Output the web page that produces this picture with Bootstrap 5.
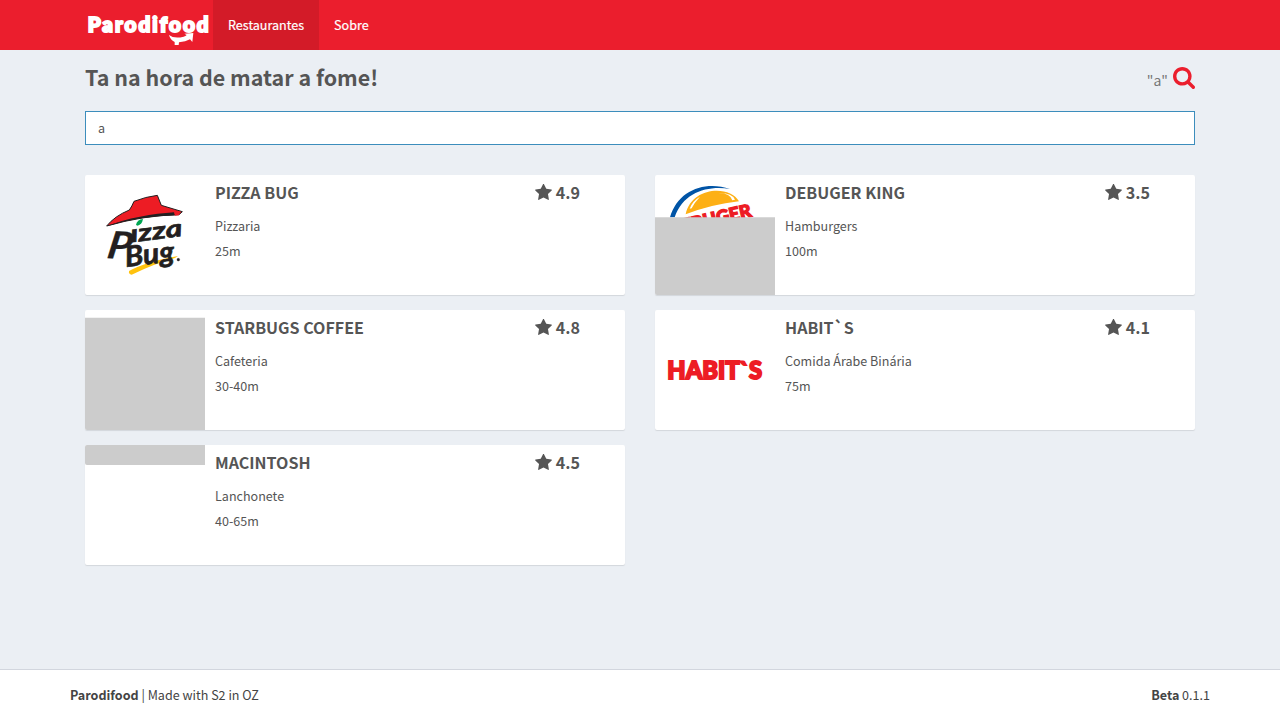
<!DOCTYPE html>
<html lang="pt-BR">
<head>
<meta charset="utf-8">
<meta name="viewport" content="width=device-width, initial-scale=1">
<title>Parodifood</title>
<link rel="stylesheet" href="https://cdn.jsdelivr.net/npm/bootstrap@5.3.0/dist/css/bootstrap.min.css">
<style>
  body { font-family: "Noto Sans CJK SC", "Noto Sans CJK JP", sans-serif; font-size: 12.55px; line-height: 20px; color: #555; background: #ebeff4; }
  .container { --bs-gutter-x: 30px; max-width: 1140px; }
  .topbar { height: 50px; background: #eb1e2d; }
  .brand-logo { width: 128px; height: 50px; }
  .topbar .nav-link { height: 50px; padding: 15px; color: #fff; line-height: 20px; }
  .topbar .nav-link span { -webkit-text-stroke: .2px #fff; }
  .topbar .nav-link.active { background: #d31b28; }
  .page-title { font-size: 21.45px; line-height: 26px; font-weight: 700; margin: 0; }
  .page-head { height: 61px; padding-top: 14px; }
  .query { font-size: 14px; color: #777; line-height: 26px; padding-top: 3px; }
  .find-icon { width: 22px; height: 22px; margin: 3px 0 0 5px; }
  .search-input { height: 34px; border: 1px solid #3c8dbc; border-radius: 0; padding: 5px 12px 7px; font-size: 12.55px; line-height: 20px; color: #555; }
  .search-input:focus { border-color: #3c8dbc; box-shadow: none; }
  .places { --bs-gutter-x: 30px; --bs-gutter-y: 15px; padding-top: 30px; }
  .place { height: 120px; background: #fff; border-radius: 2px; overflow: hidden; box-shadow: 0 1px 1px rgba(0,0,0,.1); }
  .thumb { width: 120px; height: 120px; flex: none; display: block; }
  .place-name { font-size: 16.05px; line-height: 20px; font-weight: 700; margin: 0 0 11px; }
  .place-body { padding: 7px 45px 0 10px; }
  .place-line { line-height: 25px; display: block; }
  .rating { font-size: 16.1px; line-height: 20px; font-weight: 700; }
  .rating svg { width: 17px; height: 16px; margin: 2px 4px 0 0; }
  .foot { height: 51px; background: #fff; border-top: 1px solid #d2d6de; color: #444; }
  .foot .container { padding: 15px 0; }
</style>
</head>
<body class="d-flex flex-column vh-100">
<svg class="d-none" aria-hidden="true">
  <symbol id="star" viewBox="0 50 1664 1580"><path d="M1664 647q0 22-26 48l-363 354 86 500q1 7 1 20 0 21-10.500 35.500t-30.500 14.500q-19 0-40-12l-449-236-449 236q-22 12-40 12-21 0-31.500-14.500t-10.500-35.500q0-6 2-20l86-500-364-354q-25-27-25-48 0-37 56-46l502-73 225-455q19-41 49-41t49 41l225 455 502 73q56 9 56 46z" fill="#555"/></symbol>
</svg>

<nav class="topbar">
  <div class="container d-flex">
    <a href="#" aria-label="Parodifood" class="d-block">
      <svg class="brand-logo d-block" viewBox="45 0 384 150" fill="#fff">
        <text x="53" y="95" font-family="Lato" font-weight="900" font-size="62" textLength="363" lengthAdjust="spacing" stroke="#fff" stroke-width="6">Parodifood</text>
        <path d="M297 105 Q312 117 341 110 Q347 108 350 105 L343 101 L370 99 L367 126 L360 118 Q347 125 327 127 L326 135 L314 135 L314 126 Q301 120 297 105Z"/>
      </svg>
    </a>
    <div class="nav flex-nowrap">
      <a class="nav-link active" href="#"><span>Restaurantes</span></a>
      <a class="nav-link" href="#"><span>Sobre</span></a>
    </div>
  </div>
</nav>

<main class="container flex-grow-1">
  <div class="page-head d-flex justify-content-between">
    <h1 class="page-title">Ta na hora de matar a fome!</h1>
    <div class="d-flex align-items-start">
      <span class="query">"a"</span>
      <svg class="find-icon flex-shrink-0" viewBox="64 128 1664 1664" fill="#eb1e2d"><path d="M1216 832q0-185-131.500-316.500t-316.500-131.500-316.500 131.500-131.500 316.500 131.500 316.500 316.500 131.500 316.500-131.500 131.500-316.500zm512 832q0 52-38 90t-90 38q-54 0-90-38l-343-342q-179 124-399 124-143 0-273.500-55.500t-225-150-150-225-55.500-273.500 55.500-273.500 150-225 225-150 273.500-55.500 273.500 55.500 225 150 150 225 55.500 273.500q0 220-124 399l343 343q37 37 37 90z"/></svg>
    </div>
  </div>
  <input class="form-control search-input" type="text" value="a" aria-label="Buscar">

  <div class="row places">
    <div class="col-6"><div class="place d-flex">
      <svg class="thumb" viewBox="15 15 360 360">
        <path d="M80 168 Q104 138 148 120 Q156 109 162 94 Q198 80 232 76 L244 106 L307 125 L297 134 Q190 136 80 168Z" fill="#ed1c24" stroke="#231f20" stroke-width="3" stroke-linejoin="round"/>
        <path d="M80 169 Q125 150 180 140 Q235 130 282 127 L284 136 Q165 141 80 169Z" fill="#231f20"/>
        <path d="M285 128 L301 124 L297 136 L284 137Z" fill="#ed1c24"/>
        <path d="M168 165 Q171 148 189 147 Q186 164 173 167Z" fill="#00a651"/>
        <path d="M147 303 Q199 275 294 258 L285 264 Q226 280 155 314 Q145 313 147 303Z" fill="#ffc20e"/>
        <g fill="#231f20" stroke="#231f20" font-family="Lato" font-weight="700" font-style="italic">
          <text transform="translate(78 264) rotate(2) skewX(-8) scale(1.1 1)" font-size="112" stroke-width="1">P</text>
          <text transform="translate(154 217) rotate(-7)" font-size="72" textLength="156" lengthAdjust="spacingAndGlyphs" stroke-width="2">ızza</text>
          <text transform="translate(138 291) rotate(-7)" font-size="86" textLength="149" lengthAdjust="spacingAndGlyphs" stroke-width="2">Bug</text>
          <circle cx="295" cy="269" r="4"/>
        </g>
      </svg>
      <div class="place-body flex-grow-1 d-flex justify-content-between">
        <div><h2 class="place-name">PIZZA BUG</h2><span class="place-line">Pizzaria</span><span class="place-line">25m</span></div>
        <div class="rating d-flex align-items-start"><svg><use href="#star"/></svg>4.9</div>
      </div>
    </div></div>

    <div class="col-6"><div class="place d-flex">
      <svg class="thumb" viewBox="15 15 360 360">
        <path d="M60 142 C84 60 165 32 240 57 C174 46 100 66 74 142Z" fill="#0054a6"/>
        <path d="M107 133 C124 49 240 44 267 94 Q185 103 107 133Z" fill="#fdb015"/>
        <path d="M119 116 Q127 93 150 80 Q133 98 125 115Z M207 69 Q241 70 247 91 L255 89 Q246 68 207 69Z" fill="#fff"/>
        <text transform="translate(98 187) rotate(-13)" font-family="Lato" font-weight="900" font-size="54" textLength="214" lengthAdjust="spacingAndGlyphs" fill="#ed1c24" stroke="#ed1c24" stroke-width="4">EBUGER</text>
        <path d="M15 142H375V375H15Z" fill="#ccc"/>
      </svg>
      <div class="place-body flex-grow-1 d-flex justify-content-between">
        <div><h2 class="place-name">DEBUGER KING</h2><span class="place-line">Hamburgers</span><span class="place-line">100m</span></div>
        <div class="rating d-flex align-items-start"><svg><use href="#star"/></svg>3.5</div>
      </div>
    </div></div>

    <div class="col-6"><div class="place d-flex">
      <svg class="thumb" viewBox="0 0 120 120"><path d="M0 7.700H120V120H0Z" fill="#ccc"/></svg>
      <div class="place-body flex-grow-1 d-flex justify-content-between">
        <div><h2 class="place-name">STARBUGS COFFEE</h2><span class="place-line">Cafeteria</span><span class="place-line">30-40m</span></div>
        <div class="rating d-flex align-items-start"><svg><use href="#star"/></svg>4.8</div>
      </div>
    </div></div>

    <div class="col-6"><div class="place d-flex">
      <svg class="thumb" viewBox="15 15 360 360">
        <text x="52" y="222" font-family="Lato" font-weight="900" font-size="75" textLength="284" lengthAdjust="spacingAndGlyphs" fill="#ed1c24" stroke="#ed1c24" stroke-width="6">HABIT`S</text>
      </svg>
      <div class="place-body flex-grow-1 d-flex justify-content-between">
        <div><h2 class="place-name">HABIT`S</h2><span class="place-line">Comida Árabe Binária</span><span class="place-line">75m</span></div>
        <div class="rating d-flex align-items-start"><svg><use href="#star"/></svg>4.1</div>
      </div>
    </div></div>

    <div class="col-6"><div class="place d-flex">
      <svg class="thumb" viewBox="0 0 120 120"><path d="M0 0H120V20H2Q0 20 0 18Z" fill="#ccc"/></svg>
      <div class="place-body flex-grow-1 d-flex justify-content-between">
        <div><h2 class="place-name">MACINTOSH</h2><span class="place-line">Lanchonete</span><span class="place-line">40-65m</span></div>
        <div class="rating d-flex align-items-start"><svg><use href="#star"/></svg>4.5</div>
      </div>
    </div></div>
  </div>
</main>

<footer class="foot">
  <div class="container d-flex justify-content-between">
    <span><strong>Parodifood</strong> | Made with S2 in OZ</span>
    <span><strong>Beta</strong> 0.1.1</span>
  </div>
</footer>
<script src="https://cdn.jsdelivr.net/npm/bootstrap@5.3.0/dist/js/bootstrap.bundle.min.js"></script>
</body>
</html>
